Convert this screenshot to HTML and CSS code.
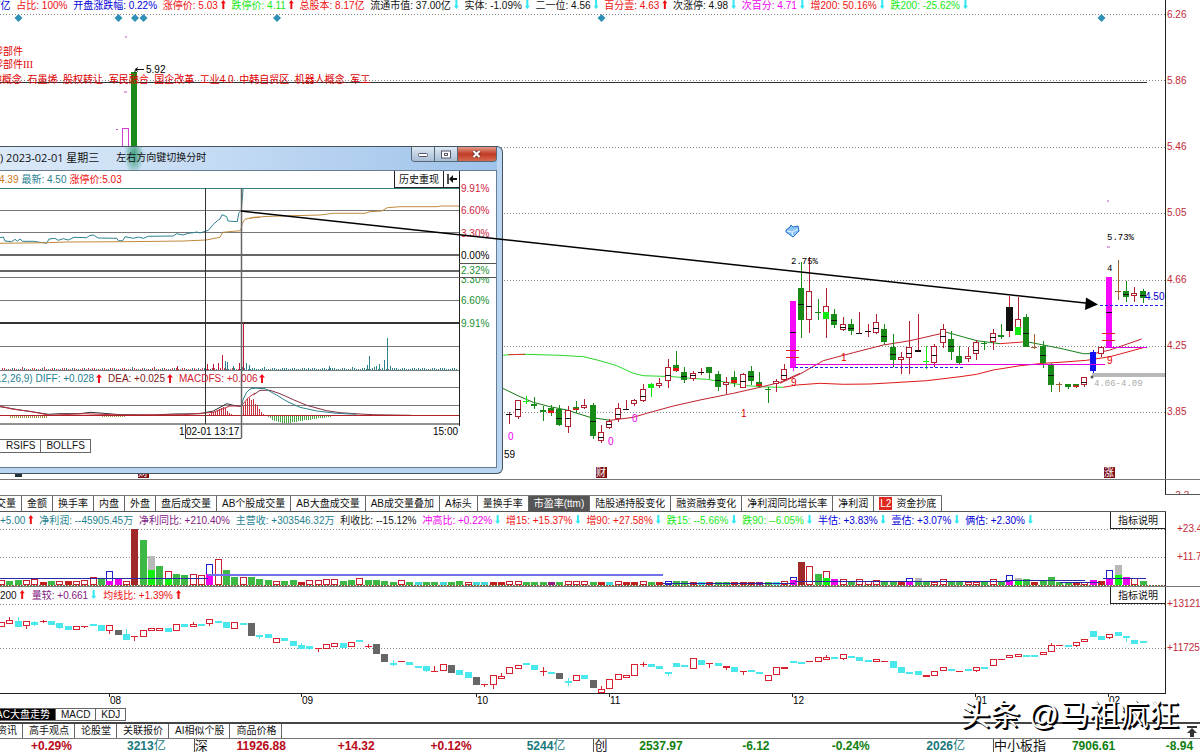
FILE: index.html
```html
<!DOCTYPE html>
<html lang="zh-CN">
<head>
<meta charset="utf-8">
<title>K线行情</title>
<link rel="stylesheet" href="styles.css">
</head>
<body>
<main class="board">
  <section class="price">
    <div class="price-main">
      <div class="info info-top">
        <span class="blue">7亿</span>
        <span class="red">占比: 100%</span>
        <span class="blue">开盘涨跌幅: 0.22%</span>
        <span class="red">涨停价: 5.03<i class="up"></i></span>
        <span class="lime">跌停价: 4.11<i class="up red"></i></span>
        <span class="red">总股本: 8.17亿</span>
        <span>流通市值: 37.00亿<i class="down"></i></span>
        <span>实体: -1.09%<i class="down"></i></span>
        <span>二一位: 4.56<i class="down"></i></span>
        <span class="red">百分壹: 4.63<i class="up"></i></span>
        <span>次涨停: 4.98<i class="down"></i></span>
        <span class="magenta">次百分: 4.71<i class="down"></i></span>
        <span class="red">增200: 50.16%<i class="down"></i></span>
        <span class="lime">跌200: -25.62%<i class="down"></i></span>
      </div>
      <svg class="plot plot-price">
        <g transform="translate(0 -14)">
          <g class="grid">
            <path d="M0 14.5H1165M0 80.5H1165M0 147.5H1165M0 213.5H1165M0 280.5H1165M0 346.5H1165M0 412.5H1165"/>
          </g>
          <g fill="#2f8fb5">
            <path d="M18.500 14l4 4-4 4-4-4zM118.500 14l4 4-4 4-4-4zM135 14l4 4-4 4-4-4zM143.500 14l4 4-4 4-4-4zM277 14l4 4-4 4-4-4zM601.500 14l4 4-4 4-4-4zM1101.500 14l4 4-4 4-4-4z"/>
          </g>
          <path d="M0 82.500H1147" stroke="#333"/>
          <path d="M125 37h2M124 92h3M116 129.500h2M1107 201h2M1107 247h3" stroke="#c050c0"/>
          <rect x="122.500" y="128.500" width="6" height="30" fill="#fff" stroke="#d040d0"/>
          <rect x="131" y="72" width="6" height="96" fill="#1a8a1a"/>
          <path d="M144 69.500h-8M138 67.500l-3 2 3 2M135 70v3" stroke="#111" fill="none"/>
          <text x="146" y="73">5.92</text>
          <g fill="#e00000">
            <text x="-7" y="55">零部件</text>
            <text x="-7" y="68" class="serif">零部件III</text>
            <text x="-8" y="83" xml:space="preserve">地概念&#160; 石墨烯&#160; 股权转让&#160; 军民融合&#160; 国企改革&#160; 工业4.0&#160; 中韩自贸区&#160; 机器人概念&#160; 军工</text>
          </g>
          <rect x="1092" y="373" width="73" height="4" fill="#b8b8b8"/>
          <g fill="none" id="averages"></g>
          <g id="candles"></g>
          <path d="M795 364.500H1105M1105 347.500H1147" stroke="#e000e0"/>
          <path d="M795 367.500H965M1100 305.500H1163" stroke="#2020f0" stroke-dasharray="3 2"/>
          <path d="M786 350.500h13M786 357.500h13M1102 333.500h13M1102 340.500h13" stroke="#e02020"/>
          <circle cx="1092" cy="377" r="1.500" fill="#555"/>
          <g class="mono">
            <text x="791" y="264">2.75%</text>
            <text x="1107" y="240">5.73%</text>
            <text x="1107" y="271">4</text>
            <text x="1094" y="386" fill="#aaa">4.06-4.09</text>
          </g>
          <text x="1145" y="300" fill="#0000c8">4.50</text>
          <text x="504" y="458">59</text>
          <g fill="#f000f0">
            <text x="508" y="440">0</text>
            <text x="608" y="445">0</text>
            <text x="632" y="422">0</text>
          </g>
          <g fill="#e00000">
            <text x="741" y="417">1</text>
            <text x="841" y="361">1</text>
            <text x="791" y="386">9</text>
            <text x="1107" y="364">9</text>
          </g>
          <path d="M786 230l4-3 1-2 2 2 5-1 1 5-6 6-7-5z" fill="#8cc4fa" stroke="#1e6fc8"/>
          <path d="M787 231l5 1 6-3M792 232l1 4" fill="none" stroke="#e8f5ff"/>
          <path d="M15 467h7v10h-7z" fill="#20303c"/>
          <rect x="138" y="467" width="11" height="11" fill="#7d0f16"/>
          <rect x="596" y="467" width="11" height="11" fill="#7d0f16"/>
          <rect x="1104" y="467" width="11" height="11" fill="#7d0f16"/>
          <g fill="#fff">
            <text x="138" y="476">财</text>
            <text x="596" y="476">财</text>
            <text x="1104" y="476">涨</text>
          </g>
        </g>
      </svg>
    </div>
    <div class="axis axis-price">
      <span>6.26</span><span>5.86</span><span>5.46</span><span>5.05</span><span>4.66</span><span>4.25</span><span>3.85</span>
    </div>
  </section>
  <div class="gap"><div class="gap-axis">-3.3</div></div>

  <nav class="tabs tabs-indicator">
    <button>成交量</button><button>金额</button><button>换手率</button><button>内盘</button><button>外盘</button><button>盘后成交量</button><button>AB个股成交量</button><button>AB大盘成交量</button><button>AB成交量叠加</button><button>A标头</button><button>量换手率</button><button class="on">市盈率(ttm)</button><button>陆股通持股变化</button><button>融资融券变化</button><button>净利润同比增长率</button><button>净利润</button><button class="level"><b>L2</b>资金抄底</button>
  </nav>

  <section class="panel panel-volume">
    <div class="panel-main">
      <div class="panel-head">
        <div class="info info-volume">
          <span class="teal">+5.00<i class="up red"></i></span>
          <span class="teal">净利润: --45905.45万</span>
          <span class="purple">净利同比: +210.40%</span>
          <span class="teal">主营收: +303546.32万</span>
          <span>利收比: --15.12%</span>
          <span class="magenta">冲高比: +0.22%<i class="down"></i></span>
          <span class="red">增15: +15.37%<i class="down"></i></span>
          <span class="red">增90: +27.58%<i class="down"></i></span>
          <span class="lime">跌15: --5.66%<i class="down"></i></span>
          <span class="lime">跌90: --6.05%<i class="down"></i></span>
          <span class="blue">半估: +3.83%<i class="down"></i></span>
          <span class="blue">壹估: +3.07%<i class="down"></i></span>
          <span class="blue">俩估: +2.30%<i class="down"></i></span>
        </div>
        <button class="explain">指标说明</button>
      </div>
      <svg class="plot plot-volume">
        <g transform="translate(0 -529)">
          <g class="grid"><path d="M0 529.500H1165M0 557.500H1165"/></g>
          <path d="M0 585.500H1165" stroke="#c03030" stroke-dasharray="1 2"/>
          <path d="M1 585.500H1165" stroke="#30a030" stroke-dasharray="1 2"/>
          <g id="volumes"></g>
          <path d="M0 578.500H208M663 583.500H795M795 581.500H1010M1005 580.500H1085M1060 582.500H1100M1103 578.500H1146" stroke="#2a2aa8"/>
          <path d="M208 575H663" stroke="#7070e8" stroke-width="2"/>
        </g>
      </svg>
    </div>
    <div class="axis axis-volume"><span>+23.44</span><span>+11.72</span></div>
  </section>

  <section class="panel panel-index">
    <div class="panel-main">
      <div class="panel-head">
        <div class="info info-index">
          <span>200<i class="up red"></i></span>
          <span class="purple">量较: +0.661<i class="down"></i></span>
          <span class="red">均线比: +1.39%<i class="up"></i></span>
        </div>
        <button class="explain">指标说明</button>
      </div>
      <svg class="plot plot-index">
        <g transform="translate(0 -604)">
          <g class="grid"><path d="M0 604.500H1165M0 648.500H1165"/></g>
          <g id="index"></g>
        </g>
      </svg>
    </div>
    <div class="axis axis-index"><span>+13121</span><span>+11725</span></div>
  </section>

  <svg class="plot plot-dates">
    <path d="M109.500 0v3M301.500 0v3M476.500 0v3M609.500 0v3M792.500 0v3M975.500 0v3M1108.500 0v3" stroke="#222"/>
    <g><text x="110" y="10">08</text><text x="302" y="10">09</text><text x="477" y="10">10</text><text x="610" y="10">11</text><text x="793" y="10">12</text><text x="976" y="10">01</text><text x="1109" y="10">02</text></g>
  </svg>

  <nav class="tabs tabs-lower"><button class="on">AC大盘走势</button><button>MACD</button><button>KDJ</button></nav>
  <nav class="tabs tabs-news">
    <button>资讯</button><button>高手观点</button><button>论股堂</button><button>关联报价</button><button>AI相似个股</button><button>商品价格</button>
    <svg class="to-top" viewBox="0 0 10 12"><path d="M0 0h10v2H0zM5 2l5 5H7v4H3V7H0z" fill="#333"/></svg>
  </nav>

  <footer class="ticker">
    <span></span><b class="rise">+0.29%</b><b class="amount">3213<em>亿</em></b>
    <span class="name">深</span><b class="rise">11926.88</b><b class="rise">+14.32</b><b class="rise">+0.12%</b><b class="amount">5244<em>亿</em></b>
    <span class="name">创</span><b class="fall">2537.97</b><b class="fall">-6.12</b><b class="fall">-0.24%</b><b class="amount">2026<em>亿</em></b>
    <span class="name">中小板指</span><b class="fall">7906.61</b><b class="fall last">-8.94</b>
  </footer>

  <section class="window">
    <header class="titlebar">
      <span class="title">) 2023-02-01 星期三</span><span class="hint">左右方向键切换分时</span>
      <div class="controls">
        <button aria-label="最小化"><svg width="12" height="8"><rect x="1.500" y="3.500" width="9" height="3" rx="1" fill="#fff" stroke="#556"/></svg></button>
        <button aria-label="最大化"><svg width="12" height="9"><rect x="1.500" y="1" width="9" height="7" fill="#fff" stroke="#556"/><rect x="4.500" y="3.500" width="3" height="2" fill="none" stroke="#556"/></svg></button>
        <button class="close" aria-label="关闭"><svg width="12" height="8"><path d="M2.500 1l6 6M8.500 1l-6 6" stroke="#633" stroke-width="3.500"/><path d="M2.500 1l6 6M8.500 1l-6 6" stroke="#fff" stroke-width="2"/></svg></button>
      </div>
    </header>
    <div class="client">
      <div class="toolbar">
        <span class="amber">4.39</span><span class="teal">最新: 4.50</span><span class="red">涨停价:5.03</span>
        <button class="replay">历史重现</button>
        <button class="rewind" aria-label="回到开头"><svg width="10" height="10"><path d="M1 0v10" stroke="#111" stroke-width="1.500"/><path d="M10 5H4" stroke="#111" stroke-width="2"/><path d="M2 5l4-4v8z" fill="#111"/></svg></button>
      </div>
      <svg class="plot plot-minute">
        <g transform="translate(0 -188)">
          <path d="M0 188.500H459" stroke="#3a8088"/>
          <path d="M0 210.500H459M0 232.500H459M0 277.500H496M0 300.500H459M0 346.500H459M0 370.500H459M0 387.500H459M0 405.500H459M459 263.500H496" stroke="#777"/>
          <path d="M0 255H459M0 271H459" stroke="#666" stroke-width="2"/>
          <path d="M0 323H459" stroke="#333" stroke-width="2"/>
          <path d="M0 424H460" stroke="#222"/>
          <path d="M459.500 188V426" stroke="#222"/>
          <g id="minute"></g>
          <path d="M0 415.500H459" stroke="#b02028"/>
          <path d="M205.500 188V424" stroke="#333"/>
          <path d="M241.500 188V438" stroke="#666" stroke-width="1.500"/>
          <g fill="#d0243c"><text x="461" y="192">9.91%</text><text x="461" y="214">6.60%</text><text x="461" y="237">3.30%</text></g>
          <text x="461" y="259">0.00%</text>
          <g fill="#189030"><text x="461" y="283">3.30%</text><text x="461" y="304">6.60%</text><text x="461" y="327">9.91%</text></g>
          <path d="M460 264h36v13h-36z" fill="#fff"/>
          <path d="M459 263.500H496M459 277.500H496" stroke="#555"/>
          <text x="461" y="274" fill="#189030">2.32%</text>
          <text x="-4" y="382" fill="#1f7f8f">12,26,9) DIFF: +0.028</text>
          <text x="108" y="382" fill="#801818">DEA: +0.025</text>
          <text x="179" y="382" fill="#d02030">MACDFS: +0.006</text>
          <path d="M99 374l3 3.500H100V383H98V377.500H96zM170 374l3 3.500H171V383H169V377.500H167zM262 374l3 3.500H263V383H261V377.500H259z" fill="#f01020"/>
          <text x="179" y="435">1</text>
          <path d="M185.500 424v14.500h56" fill="none" stroke="#444"/>
          <text x="186" y="435">02-01 13:17</text>
          <text x="433" y="435">15:00</text>
        </g>
      </svg>
      <nav class="tabs tabs-window"><button>RSIFS</button><button>BOLLFS</button></nav>
    </div>
  </section>

  <svg class="pointer"><path d="M241 211L1090 303.500" stroke="#000" stroke-width="1.500"/><path d="M1086 297.500l12 7-13 5.500z"/></svg>
  <div class="watermark">头条 @马祖疯狂</div>
</main>
<script src="charts.js"></script>
</body>
</html>
```

FILE: styles.css
```css
* { box-sizing: border-box; }

body {
  margin: 0;
  background: #fff;
  color: #111;
  font: 10px/14px "Liberation Sans", "Noto Sans CJK SC", sans-serif;
}

button {
  margin: 0;
  padding: 0;
  border: 0;
  background: #fff;
  color: inherit;
  font: inherit;
  white-space: nowrap;
}

.board { position: relative; overflow: hidden; }

.red { color: #ee1010; }
.blue { color: #0000d8; }
.lime { color: #18e818; }
.magenta { color: #f000f0; }
.teal { color: #1f7f8f; }
.purple { color: #80207f; }
.amber { color: #c87820; }

.price, .panel { display: grid; grid-template-columns: minmax(0, 1fr) 35px; }
.price { height: 480px; border-bottom: 1px solid #777; }

.info {
  display: flex;
  justify-content: space-between;
  white-space: nowrap;
}
.info-top { max-width: 973px; height: 14px; margin-left: -5px; line-height: 12px; }
.info-volume { flex: 0 1 1033px; }
.info-index { flex: 0 0 181px; }

.up, .down {
  display: inline-block;
  width: 5px;
  height: 9px;
  margin-left: 3px;
  background: currentColor;
}
.up { clip-path: polygon(50% 0, 100% 35%, 70% 35%, 70% 100%, 30% 100%, 30% 35%, 0 35%); }
.down {
  color: #30e8f0;
  clip-path: polygon(30% 0, 70% 0, 70% 65%, 100% 65%, 50% 100%, 0 65%, 30% 65%);
}

.plot { display: block; width: 100%; overflow: hidden; }
.plot text { white-space: pre; }
.plot .serif { font-family: "Liberation Serif", "Noto Sans CJK SC", serif; }
.plot .mono { font: 9px "Liberation Mono", monospace; }
.plot-price { height: 465px; }
.plot-volume { height: 57px; }
.plot-index { height: 89px; }
.plot-dates { height: 14px; }
.plot-minute { height: 251px; overflow: visible; }
.grid { stroke: #888; stroke-dasharray: 1 2; }

.axis {
  display: flex;
  flex-direction: column;
  justify-content: space-between;
  padding-left: 1px;
  border-left: 1px solid #222;
  overflow: hidden;
  color: #c02838;
}
.axis-price { padding-top: 8px; padding-bottom: 60px; }
.axis-volume { padding: 10px 0 22px 11px; }
.axis-index { padding-top: 10px; padding-bottom: 39px; }

.gap { display: flex; justify-content: flex-end; height: 15px; }
.gap-axis {
  width: 35px;
  padding: 9px 0 0 6px;
  overflow: hidden;
  border-left: 1px solid #222;
  border-bottom: 1px solid #555;
  color: #c02838;
}

.tabs { display: flex; }
.tabs button { flex: none; padding: 0 5px; border-right: 1px solid #666; }
.tabs-indicator {
  height: 17px;
  margin-right: 34px;
  border-bottom: 1px solid #555;
}
.tabs-indicator button { border-top: 1px solid #777; }
.tabs-indicator button:first-child { margin-left: -19px; }
.tabs-indicator .on { background: #555; color: #fff; }
.level b {
  margin-right: 4px;
  padding: 1px;
  background: #e02820;
  color: #fff;
  font-weight: normal;
}

.panel-head { display: flex; justify-content: space-between; height: 17px; line-height: 17px; }
.explain {
  flex: 0 0 55px;
  border-left: 1px solid #222;
  border-bottom: 1px solid #222;
}
.panel-volume { border-bottom: 1px solid #777; }
.panel-index .panel-main { border-bottom: 1px solid #222; }

.tabs-lower { height: 16px; border-bottom: 2px solid #444; }
.tabs-lower button { height: 13px; border-top: 1px solid #666; border-bottom: 1px solid #666; line-height: 11px; }
.tabs-lower .on { margin-left: -9px; background: #000; color: #fff; }
.tabs-news { height: 15px; border-bottom: 1px solid #777; }
.tabs-news button { padding: 0 5px 0 6px; }
.tabs-news button:first-child { margin-left: -9px; }
.to-top { width: 10px; height: 12px; margin: 2px 3px 0 auto; }

.ticker {
  display: grid;
  grid-template-columns: 4fr 95fr 95fr 20fr 95fr 95fr 95fr 95fr 20fr 95fr 95fr 95fr 95fr 52fr 95fr 59fr;
  height: 13px;
  overflow: hidden;
  font-size: 12px;
  line-height: 14px;
  text-align: center;
  white-space: nowrap;
}
.name { border-left: 1px solid #555; font-size: 13px; line-height: 13px; text-align: left; }
.rise { color: #b80818; }
.fall { color: #108010; }
.amount { color: #18787c; }
.amount em { font-style: normal; font-weight: normal; }
.last { padding-left: 18px; }

.window {
  position: absolute;
  top: 146px;
  left: 0;
  width: 503px;
  padding: 0 5px 5px 0;
  border: 1px solid #45545f;
  border-left: 0;
  border-radius: 0 6px 6px 0;
  background: #b9d5f2;
}
.titlebar {
  display: flex;
  height: 23px;
  background:
    radial-gradient(ellipse 10px 20px at 134px 8px, #3c9c7c 0, #3c9c7c00 100%),
    linear-gradient(90deg, #dbe9f8 0, #c6dcf4 40%, #9fc3ea 100%);
  font-family: "Open Sans", "Noto Sans CJK SC", sans-serif;
  line-height: 21px;
}
.title { font-size: 11px; }
.hint { margin-left: 17px; }
.controls { display: flex; height: 15px; margin-left: auto; border: 1px solid #556878; border-top: 0; border-radius: 0 0 4px 4px; overflow: hidden; }
.controls button {
  display: grid;
  place-items: center;
  width: 23px;
  border-right: 1px solid #556878;
  background: linear-gradient(#dce8f4, #a9bed4);
}
.controls .close { width: 38px; border-right: 0; background: linear-gradient(#e59b8c, #c03a25 50%, #d46b50); }

.client { height: 298px; border: 1px solid #667c90; border-left: 0; background: #fff; }
.toolbar { display: flex; gap: 3px; height: 17px; padding-right: 36px; line-height: 17px; }
.toolbar span:first-child { margin-left: -1px; }
.replay { width: 49px; margin-left: auto; border-left: 1px solid #222; border-bottom: 1px solid #222; }
.rewind {
  display: grid;
  place-items: center;
  width: 17px;
  margin-left: -3px;
  border: 1px solid #222;
  border-top: 0;
}
.tabs-window button { height: 14px; border-top: 1px solid #666; border-bottom: 1px solid #666; line-height: 12px; }
.tabs-window button:first-child { padding-left: 6px; }

.pointer { position: absolute; top: 0; left: 0; width: 100%; height: 480px; pointer-events: none; }
.watermark {
  position: absolute;
  right: 21px;
  bottom: 17px;
  color: #fff;
  font-size: 30px;
  line-height: 40px;
  text-shadow: 1px 1px 0 #000, 2px 2px 0 #000;
  white-space: nowrap;
}
```

FILE: charts.js
```js
const NS = 'http://www.w3.org/2000/svg';
const GREEN = '#178a17', RED = '#b02030', LIME = '#10e810', MAGENTA = '#f808f8';

function add(parent, tag, attrs) {
  const el = document.createElementNS(NS, tag);
  for (const k in attrs) el.setAttribute(k, attrs[k]);
  parent.appendChild(el);
}
const fill = (g, x, y, w, h, color) => add(g, 'rect', { x, y, width: w, height: h, fill: color });
const hollow = (g, x, y, w, h, color, inner = '#fff') =>
  add(g, 'rect', { x: x + 0.5, y: y + 0.5, width: w - 1, height: Math.max(h - 1, 1), fill: inner, stroke: color });
const slot = n => Math.round(0.9 + n * 25 / 3);

// Points are given in thirds of a pixel from the origin (ox, oy).
function line(g, ox, oy, color, pts) {
  const points = pts.split(' ').map(p => {
    const [x, y] = p.split(',');
    return (ox + x / 3).toFixed(1) + ',' + (oy + y / 3).toFixed(1);
  }).join(' ');
  add(g, 'polyline', { points, fill: 'none', stroke: color });
}

// Moving averages
const avg = document.getElementById('averages');
line(avg, 500, 330, '#28d828', '10,76 25,74 75,73 180,76 250,80 300,92 350,107 380,121 400,130 430,137 520,140 570,145 620,148 680,157 740,167 800,171 850,172');
line(avg, 500, 330, '#e03030', '25,74 75,73');
line(avg, 760, 220, '#e01818', '70,502 110,495 180,490 250,493 330,492 400,488 500,482 600,470 650,463 700,450 780,437 850,430 900,427 980,421 1050,410 1150,383');
line(avg, 500, 330, '#187818', '8,175 60,200 100,217 150,230 200,240 270,262 330,271');
line(avg, 500, 330, '#c02030', '330,271 400,262 440,250 520,228 600,210 700,190 780,172 840,157 900,130');
line(avg, 760, 220, '#c02030', '60,490 120,462 190,422 280,398 370,375 450,362 560,337');
line(avg, 760, 220, '#188018', '560,337 650,362 720,371');
line(avg, 760, 220, '#e02020', '720,371 800,365');
line(avg, 760, 220, '#188018', '800,365 900,385 970,401 1000,401');
line(avg, 760, 220, '#c02030', '1000,401 1050,390 1145,357');

// Daily candles: kind, body top, body bottom, high, low, middle mark
const candles = `t 414 415 412 424|h 400 417 400 419 409|l 401 402 396 404|g 404 406 397 409|g 410 412 406 421|x 408 413 405 416|g 409 425 405 426 418|h 410 427 406 433 418|x 407 410 401 413|h 405 408 399 409|g 405 436 403 439 421|h 432 441 425 443 437|h 421 428 419 429 424|h 408 419 403 422 414|t 409 410 400 410|h 400 404 399 406|h 389 401 384 402 396|l 384 388 383 397|h 383 386 378 388|h 367 381 359 388 375|x 365 371 351 372|g 372 380 367 383 376|h 373 379 371 381 375|t 372 373 368 375|g 367 373 367 379|g 374 387 371 391 380|h 382 385 377 394|x 377 383 371 387|h 374 388 373 388 381|g 371 381 366 385 376|x 382 386 372 387|u 389 390 387 403|h 381 384 379 392|h 369 380 364 381 375|m 301 368 301 371 332|g 288 320 262 338 304|h 291 320 257 333 306|u 312 313 299 320|p 306 319 288 338 312|g 314 325 309 328 320|h 324 330 317 331 327|g 324 331 319 335 328|t 333 334 312 334|t 331 332 324 337|h 322 333 314 334 328|g 329 342 324 345 336|g 347 360 334 367 354|h 357 360 352 374|h 347 358 321 374 353|t 350 352 314 352|l 361 362 346 369|h 346 363 344 367 355|h 329 343 324 348 336|g 339 352 331 360 346|g 356 363 346 364|h 356 359 347 362|h 342 354 340 360 350|u 343 344 341 350|h 333 342 329 350 337|g 335 337 324 339|k 307 331 296 337|p 319 335 297 335 327|g 317 347 314 347 333|o 347 348 334 349|g 346 363 341 368 355|g 365 385 363 392 375|o 384 385 382 392|g 384 387 384 389|x 384 387 384 388|h 377 385 377 387 382|b 352 371 350 373|h 347 354 346 357|m 277 347 277 347 312|o 291 292 260 300|g 291 297 281 302 294|h 293 296 287 302|g 291 298 289 303 295`;
const tone = { g: GREEN, x: GREEN, u: GREEN, l: LIME, m: MAGENTA, b: '#1010f0', h: RED, p: RED, t: RED, o: '#a06030', k: '#d02030' };
const daily = document.getElementById('candles');
candles.split('|').forEach((row, i) => {
  const [kind, ...v] = row.split(' ');
  const [top, bottom, high, low, mid] = v.map(Number);
  const x = slot(61 + i), h = bottom - top, c = tone[kind];
  fill(daily, x, high, 1, low - high, c);
  if (kind === 'h') hollow(daily, x - 3, top, 6, h, c);
  else if (kind === 'p') { hollow(daily, x - 3, top, 6, h, c); fill(daily, x - 3, mid, 6, bottom - mid, LIME); }
  else if (kind === 'x') { fill(daily, x - 3, top, 6, h, GREEN); fill(daily, x - 3, top + h / 2, 6, h / 2, '#e01818'); }
  else fill(daily, x - 3, top, kind === 'k' ? 7 : 6, h, kind === 't' || kind === 'k' ? '#111' : c);
  if (mid && kind !== 'p') fill(daily, x - 3, mid, 6, 1, '#111');
});

// Volume bars: kind and height, optionally a second bar in front
const volumes = 'r4 g3 g4 r4 r5 R2 g3 r3 R3 r3 r4 r7 g6 b13m3 m6 r3 D55 g44 y28l14 g18 r13l6 g10 g9 r10 r9 b20m10 r25 g14 g7 r7 g7 g5 g4 r3 g3 g4 R2 r4 r4 r5 r5 g3 g4 r6 g4 g4 g3 g2 r4 g2 c2 g2 g2 c2 g2 g3 r2 c2 c2 R2 R2 r3 r3 g2 g2 g2 p2 g2 r3 r3 r3 g2 R2 c2 r3 R2 R2 r3 g2 R2 b3 g3 g3 R2 c2 R2 g2 g2 R2 R2 R2 p2 g2 c2 r3 b7m4 D22 r18 g10 r13l6 m5 r5 g3 r5 r3 r4 g3 g3 R2 b6m2 y6g3 g3 r2 r5 g2 g2 r2 r2 g2 r5 g3 b9m3 y6l4 g5 R2 g3 g7 g2 g1 R1 r2 m4 R3 b14m6 y19l9 m7 r6 g3';
const paint = { g: '#3cb844', R: '#c02020', D: '#a02828', m: '#f000f0', y: '#b8b8b8', l: '#10f010', c: '#40d8d8', p: '#902080', r: '#c82030', b: '#2020c8' };
const vol = document.getElementById('volumes');
volumes.split(' ').forEach((item, n) => {
  for (const [, kind, size] of item.matchAll(/([a-zA-Z])(\d+)/g)) {
    const h = Number(size), x = slot(n) - 3;
    if ('rb'.includes(kind)) hollow(vol, x, 584 - h, 7, h + 1, paint[kind]);
    else fill(vol, x, 584 - h, 7, h + 1, paint[kind]);
  }
});

// Market index: kind, body top, body bottom, then optional high or low, thirds of a pixel below y=585
const market = 'r110-122 r105-115-97 c107-122-97 r109-119-132 c112-116-108-124 R107-110-104-114 c109-117 c115-125-132 c124-133 r122-133 R123-126-130 c118-120 c120-136 r121-136-147 k136-149 c147-163-133 R153-156-167 r134-152 r130-136 r129-135 c130-139 r118-135 c118-122 r118-124-112 c117-119 r103-115-124 c107-111 c112-127 r112-130 c114-117 k114-152 c150-153-163 c147-156 r160-170 c160-165 c168-180 c181-188-174 c183-189-195 R190-192-200 r178-190 r174-184 c174-185 r171-183 c166-168 R183-185-178-190 k177-206 k208-230 c233-235-226-242 R229-231 c232-237 c243-245 c244-255-262 R259-262-243 r238-256 k240-263 c255-266 c262-277 k277-300 R296-298-305 r271-297-313 r272-279-264 r245-265 r239-248 c234-237 c241-252 R258-260-247-272 c260-265 k265-283 c289-290-280-303 r271-286 c269-279 k286-310 r313-322-303 r283-310 r268-283 r271-277 r237-270 R237-239-230-245 c238-243 c242-249 c260-265-272 c235-244 c239-244 r220-248 c224-236 R235-237-250 c235-239 r242-247-255 c245-257 R259-260-270 c255-259 c262-265 r271-286 r247-268 r245-250 c228-229 c232-235 R227-229 r217-229 r217-223-209 c217-220 r208-218-224 c212-217 c216-225 c224-225 r222-228 R228-231 c229-245 c247-261 c260-265 c257-268 r269-274 r257-270 r245-256 c251-256 R257-259 c253-254 r245-256-262 c247-248 r223-241 R222-224 r211-217 r207-213 c209-214 c211-212 r200-208 r181-197-173 R179-181 c179-180 r170-181-186 r161-168 c139-152 c153-163 r147-157-162 c142-150 c153-154-170 c165-173 c167-168-174';
const idx = document.getElementById('index');
market.split(' ').forEach((item, n) => {
  const [top, bottom, ...ends] = item.slice(1).split('-').map(v => Math.round(585 + v / 3));
  const kind = item[0], x = slot(n), h = Math.max(bottom - top, 1);
  const c = kind === 'c' ? '#48e8ec' : kind === 'k' ? '#666' : '#d82030';
  const high = Math.min(top, ...ends), low = Math.max(bottom, ...ends);
  if (ends.length) fill(idx, x, high, 1, low - high, c);
  if (kind === 'r') hollow(idx, x - 3, top, 7, h + 1, c);
  else fill(idx, x - 3, top, 7, kind === 'c' ? h + 1 : h, c);
});

// Intraday window
const minute = document.getElementById('minute');
line(minute, 0, 145, '#2d8290', '0,278 10,276 15,288 35,290 45,283 52,289 60,282 68,289 100,289 140,295 147,282 165,280 175,286 190,281 205,285 222,277 260,278 268,272 280,270 295,279 350,280 355,287 368,287 375,275 400,280 415,276 430,280 445,274 520,273 530,266 548,270 565,265 580,263 590,261 600,264 618,258 625,256 640,238 655,225 660,222 666,209 680,215 684,228 712,230 716,205 722,197');
line(minute, 0, 145, '#2d8290', '724,195 726,170 728,150 729,130');
line(minute, 0, 145, '#c08a3c', '0,295 140,293 200,291 380,290 550,288 618,285 660,277 668,262 700,259 722,257 727,235 735,223 750,219 780,217');
line(minute, 250, 145, '#c08a3c', '0,221 10,217 60,214 210,210 250,205 345,205 360,200 395,198 412,188 450,185 560,185 575,183 627,183');
line(minute, 0, 145, '#303030', '0,785 30,790 60,795 100,801 145,808 180,806 240,806 270,802 300,804 360,809 460,810 520,807 600,806 640,798 680,776 700,781 722,784');
line(minute, 0, 145, '#c03040', '0,783 40,793 90,799 150,811 250,806 360,810 550,809 640,802 690,783 724,783 745,758 765,744');
line(minute, 0, 145, '#2d8290', '724,784 730,762 740,742 750,732 765,729');
line(minute, 250, 145, '#803040', '10,750 30,736 60,736 90,746 130,764 170,781 230,797 270,803 330,807 370,809 484,811');
line(minute, 250, 145, '#2d8290', '5,729 45,731 80,750 110,769 150,787 200,798 260,805 320,808');
for (let x = 2; x < 458; x += 2) {
  const h = 1 + (x * 7 % 5 > 2 ? 1 : 0) + (x % 22 === 0 ? 1 : 0);
  fill(minute, x, 370 - h, 1, h, x < 241 && x % 3 ? '#c04050' : '#2d8290');
}
[[177, 4, 0], [207, 6, 0], [213, 6, 0], [218, 7, 0], [222, 15, 0], [225, 9, 1], [227, 8, 1], [233, 4, 1], [239, 7, 0], [243, 47, 0], [246, 7, 1], [249, 5, 1], [329, 4, 1], [367, 5, 1], [369, 14, 1], [376, 4, 1], [379, 6, 1], [384, 10, 1], [387, 32, 1], [390, 4, 1]]
  .forEach(([x, h, t]) => fill(minute, x, 370 - h, 1, h, t ? '#2d8290' : '#c01838'));
[1, 1, 2, 3, 4, 4, 6, 7, 8, 9, 8, 5, 3, 2].forEach((h, i) => fill(minute, 205 + 2 * i, 416 - h, 1, h, '#c83040'));
[11, 14, 17, 18, 16, 17, 12, 11, 7, 4, 2].forEach((h, i) => fill(minute, 243 + 2 * i, 416 - h, 1, h, '#c83040'));
[1, 2, 4, 5, 5, 6, 6, 7, 7, 7, 7, 7, 6, 6, 6, 5, 5, 5, 4, 4, 4, 4, 3, 3, 3, 2, 2, 2, 2, 1, 1, 1].forEach((h, i) => fill(minute, 268 + 2 * i, 416, 1, h, '#48a848'));
for (let x = 10; x < 48; x += 2) fill(minute, x, 416, 1, 2, '#a09850');
for (let x = 102; x < 126; x += 2) fill(minute, x, 416, 1, 1, '#a09850');
```
